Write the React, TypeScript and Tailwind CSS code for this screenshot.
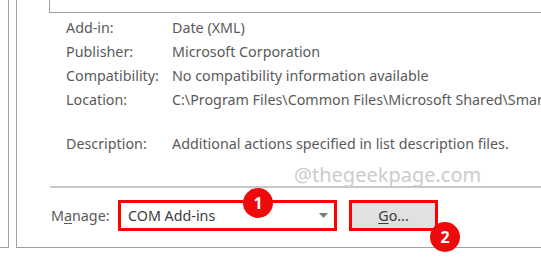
import React from 'react';

const rows = [
  { label: 'Add-in:', value: 'Date (XML)' },
  { label: 'Publisher:', value: 'Microsoft Corporation' },
  { label: 'Compatibility:', value: 'No compatibility information available' },
  { label: 'Location:', value: 'C:\\Program Files\\Common Files\\Microsoft Shared\\Smart Tag\\MOFL.DLL' },
];

const Badge = ({ n, className }: { n: string; className: string }) => (
  <div
    className={`absolute w-[30px] h-[30px] rounded-full bg-[#ee0a0a] text-white flex items-center justify-center text-[16px] font-bold ${className}`}
  >
    {n}
  </div>
);

export default function App() {
  return (
    <div
      className="flex w-[541px] h-[276px] bg-white overflow-hidden text-[#5a5a5a]"
      style={{ fontFamily: '"Noto Sans", "Open Sans", sans-serif' }}
    >
      <div className="w-[9px] h-[248px] border-r border-b border-[#a0a0a0] shrink-0" />
      <div className="w-[7px] shrink-0" />
      <div className="relative flex-1 h-[248px] border-l border-b border-[#a0a0a0] flex flex-col min-w-0">
        {/* list box above, only the bottom edge is visible */}
        <div className="ml-[32px] h-[13px] border-l border-b border-[#a0a0a0] shrink-0" />

        <div className="pl-[49px] mt-[3px] text-[14.3px] leading-[24px] whitespace-nowrap">
          {rows.map((r) => (
            <div key={r.label} className="flex">
              <span className="w-[106px] shrink-0">{r.label}</span>
              <span>{r.value}</span>
            </div>
          ))}
          <div className="flex mt-[20px]">
            <span className="w-[106px] shrink-0">Description:</span>
            <span>Additional actions specified in list description files.</span>
          </div>
        </div>

        <div className="ml-[33px] mt-[30px] h-[2px] bg-[#c8c8c8] shrink-0" />

        <div className="flex items-center mt-[12px] pl-[34px] text-[14.3px]">
          <span className="w-[67px] shrink-0">
            M<span className="underline underline-offset-2">a</span>nage:
          </span>
          <div className="w-[219px] h-[31px] border-[3px] border-[#ff0000] bg-white flex items-center pl-[7px] pr-[6px] text-[#3c3c3c]">
            <span className="flex-1">COM Add-ins</span>
            <svg width="9" height="5" viewBox="0 0 9 5">
              <path d="M0 0 L9 0 L4.5 5 Z" fill="#7a7a7a" />
            </svg>
          </div>
          <div className="ml-[12px] w-[89px] h-[31px] border-[3px] border-[#ff0000] bg-[#e1e1e1] flex items-center justify-center text-[#3c3c3c]">
            <span>
              <span className="underline underline-offset-2">G</span>o...
            </span>
          </div>
        </div>

        <div className="absolute left-[277px] top-[160px] text-[20px] text-[#cccccc]">@thegeekpage.com</div>

        <Badge n="1" className="left-[226px] top-[188px]" />
        <Badge n="2" className="left-[413px] top-[222px]" />
      </div>
    </div>
  );
}
